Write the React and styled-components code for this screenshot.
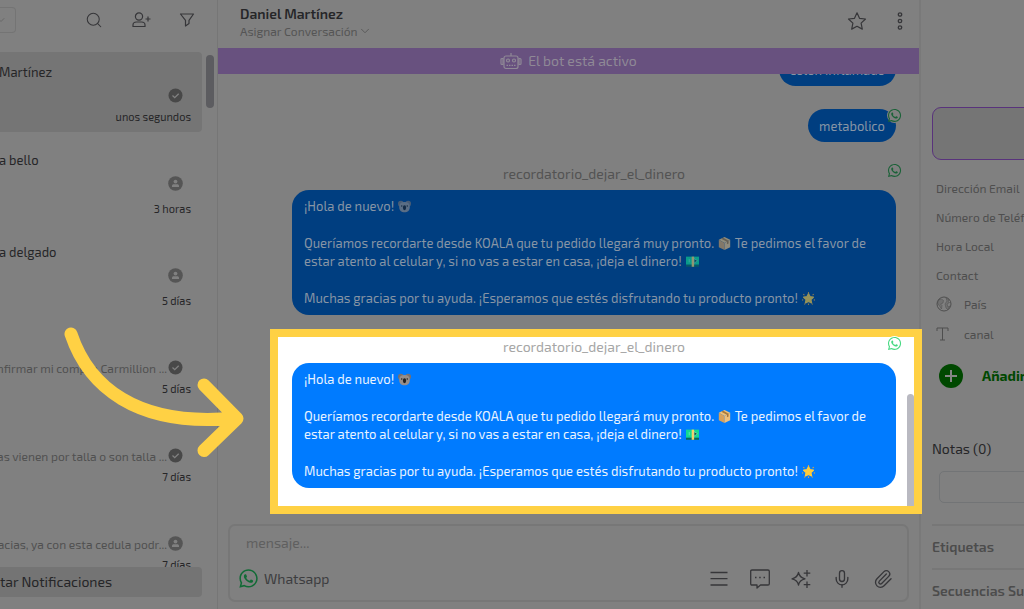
import React from "react";
import styled, { createGlobalStyle } from 'styled-components';
import { FaWhatsapp } from 'react-icons/fa';
import { Search, Paperclip, Mic, ChevronDown } from 'lucide-react';

const chats = [
    { name: "Martínez", time: "unos segundos", done: true, active: true },
    { name: "a bello", time: "3 horas" },
    { name: "a delgado", time: "5 días" },
    { preview: "nfirmar mi compra Carmillion ...", time: "5 días", done: true },
    { preview: "as vienen por talla o son talla ...", time: "7 días", done: true },
    { preview: "racias, ya con esta cedula podr...", time: "7 días" },
];

const App = () => {
    return (
        <Page>
            <GlobalStyle />
            <Sidebar>
                <SidebarTop>
                    <SortButton aria-label="Ordenar"><ChevronDown size={12} strokeWidth={1.5} /></SortButton>
                    <SidebarTools>
                        <IconButton aria-label="Buscar"><Search size={18} strokeWidth={1.4} /></IconButton>
                        <IconButton aria-label="Agregar contacto"><UserPlusIcon /></IconButton>
                        <IconButton aria-label="Filtrar"><FilterIcon /></IconButton>
                    </SidebarTools>
                </SidebarTop>
                <ListArea>
                    <ChatList>
                        {chats.map((chat, i) => (
                            <ChatItem key={i} $active={chat.active} $short={!chat.name}>
                                <ChatName>{chat.name}</ChatName>
                                <ChatLine>
                                    <Preview>{chat.preview}</Preview>
                                    {chat.done ? <DoneIcon /> : <PersonIcon />}
                                </ChatLine>
                                <ChatTime $low={chat.name && !chat.active}>{chat.time}</ChatTime>
                            </ChatItem>
                        ))}
                    </ChatList>
                    <ListThumb />
                </ListArea>
                <NotifyButton>tar Notificaciones</NotifyButton>
            </Sidebar>

            <Chat>
                <ChatHeader>
                    <div>
                        <Contact>Daniel Martínez</Contact>
                        <Assign>Asignar Conversación <ChevronDown size={14} strokeWidth={1.5} /></Assign>
                    </div>
                    <HeaderTools>
                        <IconButton aria-label="Favorito"><StarIcon /></IconButton>
                        <IconButton aria-label="Más opciones"><DotsIcon /></IconButton>
                    </HeaderTools>
                </ChatHeader>
                <Banner><BotIcon /> El bot está activo</Banner>
                <Thread>
                    <ShortBubble>colon inflamado</ShortBubble>
                    <ShortBubble>metabolico<Channel><FaWhatsapp size={15} /></Channel></ShortBubble>
                    <Template>
                        <TemplateMessage />
                    </Template>
                    <Highlight>
                        <TemplateMessage bright />
                        <ThreadThumb />
                    </Highlight>
                </Thread>
                <Composer>
                    <MessageInput aria-label="Mensaje" placeholder="mensaje..." />
                    <ComposerBar>
                        <ChannelButton><FaWhatsapp size={21} color="#126b36" /> Whatsapp</ChannelButton>
                        <ComposerTools>
                            <IconButton aria-label="Menú"><MenuIcon /></IconButton>
                            <IconButton aria-label="Respuestas"><CommentIcon /></IconButton>
                            <IconButton aria-label="Asistente"><SparkIcon /></IconButton>
                            <IconButton aria-label="Grabar audio"><Mic size={20} strokeWidth={1.6} /></IconButton>
                            <IconButton aria-label="Adjuntar"><Paperclip size={20} strokeWidth={1.6} /></IconButton>
                        </ComposerTools>
                    </ComposerBar>
                </Composer>
            </Chat>

            <Details>
                <Avatar />
                <Field>Dirección Email</Field>
                <Field>Número de Teléfono</Field>
                <Field>Hora Local</Field>
                <Field>Contact</Field>
                <Field $tall><GlobeIcon /> País</Field>
                <Field $tall><LetterIcon /> canal</Field>
                <AddButton><PlusIcon /> Añadir</AddButton>
                <NotesLabel htmlFor="notes">Notas (0)</NotesLabel>
                <NotesInput id="notes" />
                <Section>Etiquetas</Section>
                <Section>Secuencias Suscritas</Section>
            </Details>

            <Arrow viewBox="0 0 190 150" width="190" height="150" aria-hidden="true">
                <path d="M11 14C28 65 75 108 176 98M144 65L177 98.500L144 130.500" />
            </Arrow>
        </Page>
    )
};

const TemplateMessage = ({ bright }) => (
    <>
        <TemplateTitle $bright={bright}>
            recordatorio_dejar_el_dinero
            <Channel $bright={bright}><FaWhatsapp size={15} /></Channel>
        </TemplateTitle>
        <Bubble $bright={bright}>
            <p>¡Hola de nuevo! <Koala /></p>
            <p>
                Queríamos recordarte desde KOALA que tu pedido llegará muy pronto. <Box /> Te pedimos
                el favor de estar atento al celular y, si no vas a estar en casa, ¡deja el dinero! <Cash />
            </p>
            <p>Muchas gracias por tu ayuda. ¡Esperamos que estés disfrutando tu producto pronto! <Star /></p>
        </Bubble>
    </>
);

const Koala = () => (
    <Emoji viewBox="0 0 16 16">
        <circle cx="3.500" cy="4.500" r="3.500" fill="#79716f" />
        <circle cx="12.500" cy="4.500" r="3.500" fill="#79716f" />
        <path d="M1.500 8.500c0-4 2-6 6.500-6s6.500 2 6.500 6c0 4.500-2.500 6.500-6.500 6.500s-6.500-2-6.500-6.500z" fill="#978e89" />
        <ellipse cx="8" cy="9.500" rx="2" ry="3" fill="#202020" />
        <circle cx="4.600" cy="7.500" r=".9" fill="#222" />
        <circle cx="11.400" cy="7.500" r=".9" fill="#222" />
    </Emoji>
);

const Box = () => (
    <Emoji viewBox="0 0 16 16">
        <path d="M8 0l7 3.500-7 4L1 3.500z" fill="#efc078" />
        <path d="M1 3.500l7 4V16l-7-3.500z" fill="#d9a05a" />
        <path d="M15 3.500l-7 4V16l7-3.500z" fill="#efbf7c" />
        <path d="M4 2l7 3.800V9l2-1V4.700L6.500 1z" fill="#a8763a" />
    </Emoji>
);

const Cash = () => (
    <Emoji viewBox="0 0 16 16">
        <path d="M0 2h16v10H0z" fill="#12d991" />
        <path d="M0 12h16v2.500H0z" fill="#0b6856" />
        <path d="M7 2h3v12.500H7z" fill="#f5cf69" />
        <path d="M10 4.500l4 2.500-4 3zM4 5v4" fill="#0b5347" stroke="#b3f6da" strokeWidth=".6" />
    </Emoji>
);

const Star = () => (
    <Emoji viewBox="0 0 16 16">
        <path d="M8 2l2 3.800 4 .6-3 3 .8 4.100L8 11.700l-3.800 1.800.8-4.100-3-3 4-.6z" fill="#fccb3e" stroke="#fccb3e" strokeWidth="1.500" strokeLinejoin="round" />
        <path d="M8 0v1.500M1.500 2.500l1.500 1.300M14.500 2.500L13 3.800M0 10l1.500-.4M16 10l-1.500-.4M8 14v2M3 15.500l.8-1.300M13 15.500l-.8-1.300" stroke="#d9a13d" strokeWidth="1.300" />
    </Emoji>
);

const UserPlusIcon = () => (
    <svg width="20" height="18" viewBox="0 0 20 18" fill="none" stroke="currentColor" strokeWidth="1.200">
        <circle cx="8" cy="5.500" r="3.600" />
        <path d="M2 15.500v-1.500c0-2 1.500-3 3.500-3h5c2 0 3.500 1 3.500 3v1.500zM14.500 8h5M17 5.500v5" />
    </svg>
);

const FilterIcon = () => (
    <svg width="16" height="16" viewBox="0 0 16 16" fill="none" stroke="currentColor" strokeWidth="1.200" strokeLinejoin="round">
        <path d="M1.500 2h13L10 8.300v3.200L6.500 14V8.300z" />
    </svg>
);

const DoneIcon = () => (
    <Mark viewBox="0 0 15 15">
        <circle cx="7.500" cy="7.500" r="7" fill="#484848" />
        <path d="M4.500 7.500l2.200 2.100L10.700 5.700" fill="none" stroke="#808080" strokeWidth="1.300" />
    </Mark>
);

const PersonIcon = () => (
    <Mark viewBox="0 0 15 15">
        <circle cx="7.500" cy="7.500" r="7.300" fill="#555" />
        <circle cx="7.500" cy="5.600" r="1.900" fill="#808080" />
        <path d="M4 11V9.800c0-1 .8-1.600 1.800-1.600h3.400c1 0 1.800.6 1.800 1.600V11z" fill="#808080" />
    </Mark>
);

const StarIcon = () => (
    <svg width="20" height="20" viewBox="0 0 20 20" fill="none" stroke="currentColor" strokeWidth="1.200" strokeLinejoin="round">
        <path d="M10 1.800l2.500 5.500 6 .7-4.400 4.100 1.200 6L10 15.300 4.700 18.100l1.200-6L1.500 8l6-.7z" />
    </svg>
);

const DotsIcon = () => (
    <svg width="8" height="20" viewBox="0 0 8 20" fill="none" stroke="currentColor" strokeWidth="1.300">
        <circle cx="4" cy="3.500" r="1.700" />
        <circle cx="4" cy="10" r="1.700" />
        <circle cx="4" cy="16.500" r="1.700" />
    </svg>
);

const BotIcon = () => (
    <svg width="22" height="18" viewBox="0 0 22 18" fill="none" stroke="currentColor" strokeWidth="1.200">
        <rect x="4" y="4" width="14" height="12.500" rx="2" />
        <path d="M11 4V1M3 6.500H2a1 1 0 0 0-1 1v4a1 1 0 0 0 1 1h1zM19 6.500h1a1 1 0 0 1 1 1v4a1 1 0 0 1-1 1h-1z" />
        <path d="M6.500 13.300h9" strokeDasharray="1.500 1" />
        <circle cx="8" cy="8.500" r="1.500" />
        <circle cx="14" cy="8.500" r="1.500" />
    </svg>
);

const MenuIcon = () => (
    <svg width="20" height="20" viewBox="0 0 20 20" stroke="currentColor" strokeWidth="1.300">
        <path d="M1.500 3.500h17M1.500 9.700h17M1.500 16h17" />
    </svg>
);

const CommentIcon = () => (
    <svg width="20" height="20" viewBox="0 0 20 20" fill="none" stroke="currentColor" strokeWidth="1.300" strokeLinejoin="round">
        <path d="M2 1h16q1.300 0 1.300 1.300v12.400q0 1.300-1.300 1.300h-7.500L7 19v-3H2Q.7 16 .7 14.700V2.300Q.7 1 2 1z" />
        <path d="M5 8.500h1.500M9.200 8.500h1.500M13.500 8.500H15" strokeWidth="1.600" />
    </svg>
);

const SparkIcon = () => (
    <svg width="20" height="20" viewBox="0 0 20 20" fill="none" stroke="currentColor" strokeWidth="1.300" strokeLinejoin="round">
        <path d="M7.500 3.500q1 5 6.500 6.300-5.500 1.200-6.500 6.200-1-5-6.500-6.200 5.500-1.300 6.500-6.300zM16 1v6.500M12.700 4.200h6.600M16 12.500V19M12.700 15.700h6.600" />
    </svg>
);

const GlobeIcon = () => (
    <svg width="16" height="16" viewBox="0 0 16 16" fill="none" stroke="currentColor" strokeWidth="1">
        <circle cx="8" cy="8" r="7" />
        <path d="M3 3.500l2.500-.5 2 1.500L7 7 4.500 8 6 9.500 5.500 13 3.500 10 1.500 7zM10 2l3 2-1 1.500 1.500 1L11 8l1 3 2-1-2.500 3.500L10 12 9 8l2-3z" fill="currentColor" fillOpacity=".3" strokeWidth=".5" />
    </svg>
);

const LetterIcon = () => (
    <svg width="16" height="14" viewBox="0 0 16 14" fill="none" stroke="currentColor" strokeWidth="1">
        <path d="M1 4V1h11v3M6.500 1v12M4 13h5" />
    </svg>
);

const PlusIcon = () => (
    <svg width="24" height="24" viewBox="0 0 24 24">
        <circle cx="12" cy="12" r="12" fill="#004800" />
        <path d="M12 6v12M6 12h12" stroke="#858585" strokeWidth="2" />
    </svg>
);

const GlobalStyle = createGlobalStyle`
  * {
    box-sizing: border-box;
  }
  body {
    margin: 0;
    background: #808080;
    color: #262628;
    font: 13px/20px "Exo 2", Roboto, "Liberation Sans", sans-serif;
  }
  button, input {
    font: inherit;
    color: inherit;
    padding: 0;
    border: 0;
    background: none;
    outline: none;
  }
  button {
    display: flex;
    align-items: center;
  }
  p {
    margin: 0;
  }
  svg {
    flex-shrink: 0;
  }
`;

const Page = styled.div`
  position: relative;
  display: flex;
  height: 100vh;
  overflow: hidden;
`;

const Sidebar = styled.aside`
  display: flex;
  flex-direction: column;
  flex: 0 0 218px;
  overflow: hidden;
  border-right: 1px solid #767676;
`;

const SidebarTop = styled.div`
  display: flex;
  align-items: flex-start;
  justify-content: space-between;
  height: 52px;
  padding: 7px 22px 0 0;
`;

const SortButton = styled.button`
  width: 16px;
  height: 26px;
  border: 1px solid #747474;
  border-left: 0;
  border-radius: 0 4px 4px 0;
  color: #606060;
  justify-content: flex-end;
  padding-right: 8px;
`;

const SidebarTools = styled.div`
  display: flex;
  align-items: center;
  gap: 28px;
  height: 26px;
`;

const IconButton = styled.button`
  color: #363639;
`;

const ListArea = styled.div`
  display: flex;
  flex: 1;
  gap: 4px;
  min-height: 0;
  overflow: hidden;
`;

const ChatList = styled.div`
  width: 202px;
`;

const ChatItem = styled.div`
  height: ${props => props.$active ? 80 : props.$short ? 88 : 92}px;
  margin-bottom: ${props => props.$active ? 8 : 0}px;
  padding: 10px 11px 0 0;
  border-radius: 0 4px 4px 0;
  background: ${props => props.$active ? '#757575' : 'transparent'};
`;

const ChatName = styled.div`
  height: 24px;
  margin-left: -1px;
  font-size: 13px;
`;

const ChatLine = styled.div`
  display: flex;
  align-items: center;
  justify-content: flex-end;
  gap: 1px;
  height: 18px;
  padding-right: 8px;
`;

const Preview = styled.div`
  display: flex;
  flex: 1;
  min-width: 0;
  justify-content: flex-end;
  overflow: hidden;
  white-space: nowrap;
  font-size: 12px;
  line-height: 18px;
  padding-top: 2px;
  color: #515151;
`;

const Mark = styled.svg`
  width: 15px;
  height: 15px;
`;

const ChatTime = styled.div`
  padding-top: ${props => props.$low ? 7 : 3}px;
  font-size: 11px;
  text-align: right;
`;

const ListThumb = styled.div`
  width: 8px;
  height: 53px;
  margin-top: 3px;
  border-radius: 4px;
  background: #5c5c60;
`;

const NotifyButton = styled.button`
  width: 202px;
  height: 30px;
  margin-bottom: 12px;
  border-radius: 0 4px 4px 0;
  background: #747474;
  font-size: 14px;
`;

const Chat = styled.main`
  display: flex;
  flex-direction: column;
  flex: 1;
  min-width: 0;
`;

const ChatHeader = styled.header`
  display: flex;
  justify-content: space-between;
  height: 48px;
  padding: 4px 15px 0 22px;
`;

const Contact = styled.div`
  font-size: 14px;
  line-height: 19px;
  font-weight: 600;
`;

const Assign = styled.button`
  height: 16px;
  font-size: 12px;
  color: #555;
`;

const HeaderTools = styled.div`
  display: flex;
  gap: 29px;
  height: 34px;
`;

const Banner = styled.div`
  position: relative;
  z-index: 1;
  display: flex;
  align-items: center;
  justify-content: center;
  gap: 6px;
  height: 26px;
  background: #68517f;
  color: #8f8996;
  font-size: 14px;
`;

const Thread = styled.div`
  display: flex;
  flex-direction: column;
  align-items: stretch;
  flex: 1;
  margin-top: -21px;
`;

const ShortBubble = styled.div`
  position: relative;
  align-self: flex-end;
  height: 33px;
  margin: 0 23px 23px 0;
  padding: 7px 11px;
  border-radius: 17px;
  background: #003e80;
  color: #8795a5;
`;

const Channel = styled.span`
  position: absolute;
  top: -1px;
  right: -6px;
  display: flex;
  border-radius: 50%;
  background: ${props => props.$bright ? '#fff' : '#808080'};
  color: ${props => props.$bright ? '#47d982' : '#1b6238'};
`;

const Template = styled.div`
  margin: -1px 23px 0 74px;
`;

const Highlight = styled.div`
  position: relative;
  z-index: 1;
  margin: 14px -3px 0 52px;
  padding: 0 18px 18px 14px;
  border: 8px solid #ffd144;
  background: #fff;
`;

const TemplateTitle = styled.div`
  position: relative;
  height: 26px;
  font-size: 14px;
  text-align: center;
  color: ${props => props.$bright ? '#a6a6a6' : '#535353'};
`;

const Bubble = styled.div`
  display: flex;
  flex-direction: column;
  gap: 19px;
  padding: 7px 12px 8px;
  border-radius: 17px;
  line-height: 18px;
  background: ${props => props.$bright ? '#007bff' : '#003e80'};
  color: ${props => props.$bright ? '#e9f3ff' : '#8795a5'};

  svg {
    opacity: ${props => props.$bright ? 1 : 0.6};
  }
`;

const Emoji = styled.svg`
  width: 13px;
  height: 13px;
  margin: 0 1px;
  vertical-align: -2px;
`;

const ThreadThumb = styled.div`
  position: absolute;
  right: 0;
  bottom: 0;
  width: 7px;
  height: 112px;
  border-radius: 4px 4px 0 0;
  background: #b9b9c1;
`;

const Composer = styled.form`
  height: 78px;
  margin: 0 10px 7px;
  padding: 7px 14px 0 8px;
  border: 2px solid #777;
  border-radius: 7px;
`;

const MessageInput = styled.input`
  display: block;
  width: 100%;
  height: 20px;
  padding-left: 8px;
  font-size: 14px;

  &::placeholder {
    color: #5f5f5f;
    opacity: 1;
  }
`;

const ComposerBar = styled.div`
  display: flex;
  justify-content: space-between;
  padding-top: 15px;
`;

const ChannelButton = styled.button`
  gap: 5px;
  font-size: 14px;
  color: #3d3d3f;
`;

const ComposerTools = styled.div`
  display: flex;
  gap: 21px;
`;

const Details = styled.aside`
  flex: 0 0 105px;
  padding: 107px 0 0 11px;
  overflow: hidden;
  border-left: 2px solid #797979;
  white-space: nowrap;
`;

const Avatar = styled.div`
  height: 53px;
  margin: 0 -20px 13px 0;
  border: 1px solid #59337c;
  border-radius: 9px;
  background: #757575;
`;

const Field = styled.div`
  display: flex;
  align-items: center;
  gap: 12px;
  height: ${props => props.$tall ? 30 : 29}px;
  padding-left: 4px;
  font-size: 12px;
  color: #4e4e4e;
`;

const AddButton = styled.button`
  gap: 19px;
  margin: 15px 0 51px 7px;
  font-size: 14px;
  font-weight: 700;
  color: #004800;
`;

const NotesLabel = styled.label`
  display: block;
  font-size: 14px;
`;

const NotesInput = styled.input`
  width: 120px;
  height: 32px;
  margin: 12px 0 21px 7px;
  border: 1px solid #727476;
  border-radius: 5px;
`;

const Section = styled.div`
  height: 44px;
  padding-top: 11px;
  border-top: 2px solid #777;
  font-size: 14px;
  font-weight: 600;
  color: #4c4c4c;
`;

const Arrow = styled.svg`
  position: absolute;
  z-index: 2;
  left: 60px;
  top: 320px;
  fill: none;
  stroke: #ffd144;
  stroke-width: 13;
  stroke-linecap: round;
  stroke-linejoin: round;
`;

export default App;
